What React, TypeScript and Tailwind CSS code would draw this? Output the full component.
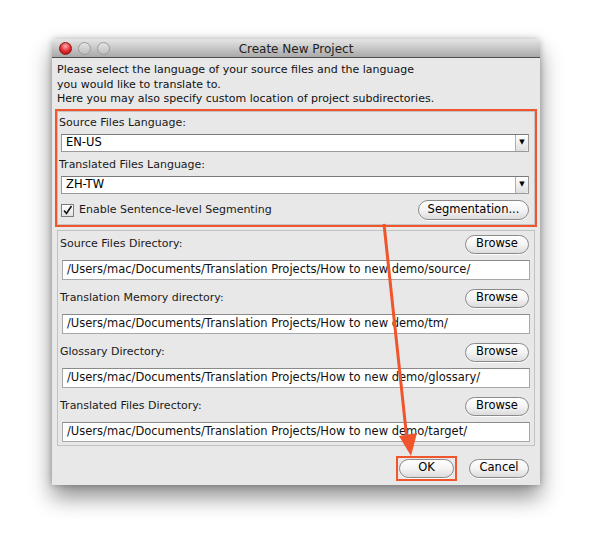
import React from "react";

const font = { fontFamily: '"DejaVu Sans", "Liberation Sans", sans-serif' };

const AquaButton: React.FC<{ label: string; className?: string }> = ({ label, className }) => (
  <div
    className={
      "h-[19px] flex items-center justify-center rounded-full border border-[#8a8a8a] bg-gradient-to-b from-white via-[#f4f4f4] to-[#dcdcdc] text-[11.5px] text-black shadow-[0_1px_0_rgba(255,255,255,0.8)] " +
      (className ?? "")
    }
  >
    {label}
  </div>
);

const Combo: React.FC<{ value: string }> = ({ value }) => (
  <div className="h-[18px] flex border border-[#9a9a9a] border-t-[#7a7a7a] bg-white">
    <div className="flex-1 flex items-center pl-[4px] text-[11.5px] text-black">{value}</div>
    <div className="w-[13px] flex items-center justify-center rounded-r-[3px] border-l border-[#b0b0b0] bg-gradient-to-b from-white to-[#dedede] text-[7px] text-black">
      ▼
    </div>
  </div>
);

const PathField: React.FC<{ value: string }> = ({ value }) => (
  <div className="h-[20px] flex items-center border border-[#a8a8a8] border-t-[#8a8a8a] bg-white pl-[4px] text-[11.5px] text-[#111] whitespace-nowrap overflow-hidden">
    {value}
  </div>
);

const DirGroup: React.FC<{ label: string; path: string; last?: boolean }> = ({ label, path, last }) => (
  <div className={"flex flex-col " + (last ? "" : "mb-[9px]")}>
    <div className="flex items-center justify-between h-[19px]">
      <span className="pl-[1px] text-[11px] text-[#1a1a1a]">{label}</span>
      <AquaButton label="Browse" className="w-[64px] mr-[5px]" />
    </div>
    <div className="mt-[6px] pl-[3px] pr-[4px]">
      <PathField value={path} />
    </div>
  </div>
);

export default function App() {
  const base = "/Users/mac/Documents/Translation Projects/How to new demo/";
  return (
    <div className="relative w-[592px] h-[550px] bg-white" style={font}>
      <div className="pt-[39px] pl-[52px]">
        <div className="w-[488px] flex flex-col rounded-t-[4px] shadow-[0_12px_22px_rgba(0,0,0,0.45),0_0_6px_rgba(0,0,0,0.25)]">
          {/* title bar */}
          <div className="relative h-[19px] flex items-center justify-center rounded-t-[4px] bg-gradient-to-b from-[#e6e6e6] to-[#a9a9a9] border-b border-[#4d4d4d]">
            <div className="absolute left-[7px] top-[3px] flex gap-[6px]">
              <div className="w-[13px] h-[13px] rounded-full bg-[radial-gradient(circle_at_50%_30%,#ffb0b0,#e0262a_55%,#a01014)] border border-[#8a1a1a]" />
              <div className="w-[13px] h-[13px] rounded-full bg-gradient-to-b from-[#e4e4e4] to-[#bdbdbd] border border-[#9c9c9c]" />
              <div className="w-[13px] h-[13px] rounded-full bg-gradient-to-b from-[#e4e4e4] to-[#bdbdbd] border border-[#9c9c9c]" />
            </div>
            <span className="pt-[2px] text-[12px] text-[#222]">Create New Project</span>
          </div>

          {/* body */}
          <div className="bg-[#e8e8e8] pl-[5px] pr-[5px] pt-[5px] pb-[4px] flex flex-col">
            <div className="text-[11px] leading-[14.5px] text-[#111]">
              <div>Please select the language of your source files and the language</div>
              <div>you would like to translate to.</div>
              <div>Here you may also specify custom location of project subdirectories.</div>
            </div>

            {/* language panel */}
            <div className="mt-[4px] outline-2 outline-[#f1552b] border border-[#c4c4c4] px-[1px] pt-[4px] pb-[3px] flex flex-col">
              <span className="h-[14px] leading-[14px] text-[11px] text-[#1a1a1a]">Source Files Language:</span>
              <div className="mt-[4px] pl-[2px] pr-[4px]">
                <Combo value="EN-US" />
              </div>
              <span className="mt-[6px] h-[14px] leading-[14px] text-[11px] text-[#1a1a1a]">Translated Files Language:</span>
              <div className="mt-[4px] pl-[2px] pr-[4px]">
                <Combo value="ZH-TW" />
              </div>
              <div className="mt-[6px] h-[21px] flex items-center justify-between">
                <div className="flex items-center gap-[5px] pl-[2px]">
                  <div className="w-[13px] h-[13px] border border-[#7d7d7d] bg-gradient-to-b from-white to-[#e2e2e2] flex items-center justify-center">
                    <svg width="11" height="11" viewBox="0 0 11 11">
                      <path d="M2 5.5 L4.5 8.5 L9.5 1" fill="none" stroke="#111" strokeWidth="1.6" />
                    </svg>
                  </div>
                  <span className="text-[11px] text-[#1a1a1a]">Enable Sentence-level Segmenting</span>
                </div>
                <AquaButton label="Segmentation..." className="w-[111px] h-[20px] mr-[4px]" />
              </div>
            </div>

            {/* directories panel */}
            <div className="mt-[5px] border border-[#c2c2c2] pl-[1px] pt-[4px] pb-[3px] flex flex-col">
              <DirGroup label="Source Files Directory:" path={base + "source/"} />
              <DirGroup label="Translation Memory directory:" path={base + "tm/"} />
              <DirGroup label="Glossary Directory:" path={base + "glossary/"} />
              <DirGroup label="Translated Files Directory:" path={base + "target/"} last />
            </div>

            {/* buttons */}
            <div className="mt-[10px] flex justify-end gap-[12px] pr-[6px]">
              <div className="border-2 border-[#f1552b] p-[1px]">
                <AquaButton label="OK" className="w-[55px]" />
              </div>
              <div className="pt-[3px]">
                <AquaButton label="Cancel" className="w-[60px]" />
              </div>
            </div>
          </div>
        </div>
      </div>

      {/* annotation arrow */}
      <svg className="absolute left-0 top-0" width="592" height="550" viewBox="0 0 592 550">
        <line x1="384" y1="224" x2="407" y2="440" stroke="#f1552b" strokeWidth="3" />
        <path d="M399 436 L417 433 L411 456 Z" fill="#f1552b" />
      </svg>
    </div>
  );
}
